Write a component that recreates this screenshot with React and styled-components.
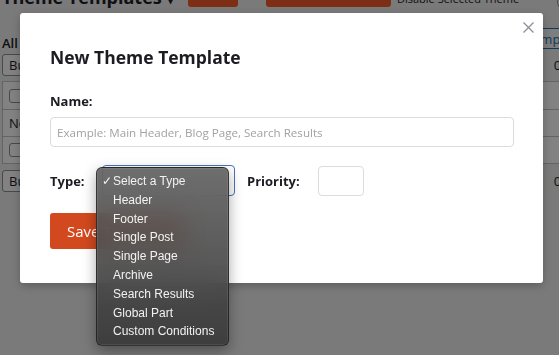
import React from 'react';
import styled, { createGlobalStyle } from 'styled-components';

const typeOptions = [
  'Select a Type',
  'Header',
  'Footer',
  'Single Post',
  'Single Page',
  'Archive',
  'Search Results',
  'Global Part',
  'Custom Conditions',
];

const GlobalStyle = createGlobalStyle`
  html, body {
    margin: 0;
    padding: 0;
  }
  body {
    width: 559px;
    height: 355px;
    overflow: hidden;
    background: #f0f0f1;
    font-family: 'Open Sans', 'Noto Sans', sans-serif;
    color: #1d2327;
  }
  * {
    box-sizing: border-box;
  }
`;

const App = () => {
  return (
    <>
      <GlobalStyle />
      <AdminPage>
        <TitleBar>
          <PageTitle>Theme Templates ▾</PageTitle>
          <HeaderButton>Themes</HeaderButton>
          <HeaderButton className="wide">Add New Theme Template</HeaderButton>
          <DisableText>Disable Selected Theme</DisableText>
          <Toggle />
        </TitleBar>
        <FilterRow>
          <ViewLinks>All (0)</ViewLinks>
          <LinkButton>Import Templates</LinkButton>
        </FilterRow>
        <Tablenav>
          <BulkSelect>Bulk actions</BulkSelect>
          <ItemCount>0 items</ItemCount>
        </Tablenav>
        <ListTable>
          <TableRow>
            <Checkbox />
          </TableRow>
          <TableRow>No theme templates found.</TableRow>
          <TableRow>
            <Checkbox />
          </TableRow>
        </ListTable>
        <Tablenav className="bottom">
          <BulkSelect>Bulk actions</BulkSelect>
          <ItemCount>0 items</ItemCount>
        </Tablenav>
      </AdminPage>

      <Overlay>
        <Modal>
          <CloseButton aria-label="Close">
            <svg width="11" height="11" viewBox="0 0 11 11">
              <path d="M0.5 0.5 L10.5 10.5 M10.5 0.5 L0.5 10.5" stroke="#8c8f94" strokeWidth="1.3" fill="none" />
            </svg>
          </CloseButton>
          <ModalTitle>New Theme Template</ModalTitle>
          <FieldLabel>Name:</FieldLabel>
          <TextInput placeholder="Example: Main Header, Blog Page, Search Results" />
          <TypeRow>
            <InlineLabel $width={52}>Type:</InlineLabel>
            <SelectBox>
              <TypeMenu>
                {typeOptions.map((option, i) => (
                  <MenuItem key={option}>
                    {i === 0 && <Check>✓</Check>}
                    {option}
                  </MenuItem>
                ))}
              </TypeMenu>
            </SelectBox>
            <InlineLabel $width={71} $gap={12}>
              Priority:
            </InlineLabel>
            <PriorityInput />
          </TypeRow>
          <SaveButton>Save Template</SaveButton>
        </Modal>
      </Overlay>
    </>
  );
};

const AdminPage = styled.div`
  width: 604px;
  margin-top: -22px;
  padding: 0 6px 0 2px;
  font-size: 13px;
`;

const TitleBar = styled.div`
  display: flex;
  align-items: center;
  height: 30px;
`;

const PageTitle = styled.h1`
  width: 160px;
  margin: 0;
  font-size: 18px;
  font-weight: 700;
  line-height: 28px;
  color: #1d2327;
  white-space: nowrap;
  align-self: flex-end;
  margin-bottom: -3px;
`;

const HeaderButton = styled.button`
  height: 28px;
  width: 50px;
  margin-left: 26px;
  border: none;
  border-radius: 3px;
  background: #f45d2a;
  color: #fff;
  font-family: inherit;
  font-size: 12px;
  white-space: nowrap;
  overflow: hidden;

  &.wide {
    width: 125px;
    margin-left: 28px;
  }
`;

const DisableText = styled.span`
  align-self: flex-end;
  margin-left: 6px;
  margin-bottom: 2px;
  font-size: 11px;
  white-space: nowrap;
`;

const Toggle = styled.span`
  align-self: flex-end;
  width: 16px;
  height: 16px;
  margin-left: 38px;
  margin-bottom: -2px;
  border-radius: 50%;
  border: 1px solid #8c8f94;
  background: #fff;
`;

const FilterRow = styled.div`
  display: flex;
  justify-content: space-between;
  align-items: flex-start;
  height: 24px;
  margin-top: 20px;
`;

const ViewLinks = styled.span`
  margin-top: 6px;
  line-height: 18px;
  font-size: 13px;
  font-weight: 600;
`;

const LinkButton = styled.span`
  height: 21px;
  padding: 0 8px;
  line-height: 20px;
  border: 1px solid #2271b1;
  border-radius: 3px;
  color: #2271b1;
  background: #f6f7f7;
  font-size: 13px;
`;

const Tablenav = styled.div`
  display: flex;
  justify-content: space-between;
  align-items: center;
  height: 24px;
  margin-top: 1px;

  &.bottom {
    margin-top: 5px;
  }
`;

const BulkSelect = styled.span`
  height: 22px;
  padding: 0 6px;
  line-height: 20px;
  border: 1px solid #8c8f94;
  border-radius: 3px;
  background: #fff;
  font-size: 13px;
`;

const ItemCount = styled.span`
  font-size: 13px;
`;

const ListTable = styled.div`
  margin-top: 4px;
  border: 1px solid #c3c4c7;
  background: #fff;
`;

const TableRow = styled.div`
  display: flex;
  align-items: center;
  height: 27px;
  padding-left: 6px;
  font-size: 13px;
  border-top: 1px solid #c3c4c7;

  &:first-child {
    border-top: none;
  }
`;

const Checkbox = styled.span`
  width: 14px;
  height: 14px;
  border: 1px solid #8c8f94;
  border-radius: 3px;
  background: #fff;
`;

const Overlay = styled.div`
  position: fixed;
  inset: 0;
  padding: 13px 0 0 20px;
  background: rgba(0, 0, 0, 0.49);
`;

const Modal = styled.div`
  position: relative;
  width: 523px;
  padding: 31px 29px 34px 30px;
  background: #fff;
  border-radius: 3px;
  box-shadow: 0 3px 10px rgba(0, 0, 0, 0.25);
`;

const CloseButton = styled.button`
  position: absolute;
  top: 9px;
  right: 9px;
  display: flex;
  padding: 0;
  border: none;
  background: none;
`;

const ModalTitle = styled.h2`
  margin: 0;
  font-size: 17.5px;
  font-weight: 700;
  line-height: 26px;
  color: #1c1b22;
`;

const FieldLabel = styled.label`
  display: block;
  margin-top: 21px;
  font-size: 13px;
  font-weight: 700;
  line-height: 20px;
  color: #1c1b22;
`;

const TextInput = styled.input`
  display: block;
  width: 100%;
  height: 30px;
  margin-top: 6px;
  padding: 0 6px;
  border: 1px solid #dcdcde;
  border-radius: 4px;
  font-family: 'Open Sans', 'Noto Sans', sans-serif;
  font-size: 11.6px;
  color: #1d2327;

  &::placeholder {
    color: #a2a2a6;
  }
`;

const TypeRow = styled.div`
  display: flex;
  align-items: center;
  height: 31px;
  margin-top: 18px;
`;

const InlineLabel = styled.label`
  width: ${({ $width }) => $width}px;
  margin-left: ${({ $gap }) => $gap || 0}px;
  font-size: 13px;
  font-weight: 700;
  line-height: 20px;
  color: #1c1b22;
`;

const SelectBox = styled.div`
  position: relative;
  width: 133px;
  height: 31px;
  border: 1px solid #4a72bf;
  border-radius: 4px;
  background: #fff;
`;

const PriorityInput = styled.input`
  width: 46px;
  height: 30px;
  border: 1px solid #dcdcde;
  border-radius: 4px;
`;

const SaveButton = styled.button`
  display: block;
  height: 36px;
  margin-top: 17px;
  padding: 0 17px;
  border: none;
  border-radius: 3px;
  background: #d2491f;
  color: #fff;
  font-family: 'Open Sans', 'Noto Sans', sans-serif;
  font-size: 15px;
`;

const TypeMenu = styled.ul`
  position: absolute;
  top: 1px;
  left: -7px;
  width: 133px;
  margin: 0;
  padding: 4px 0;
  list-style: none;
  border: 1px solid rgba(20, 20, 20, 0.6);
  border-radius: 6px;
  background: linear-gradient(rgba(94, 94, 94, 0.9), rgba(58, 58, 58, 0.94));
  backdrop-filter: blur(14px);
  box-shadow: 0 5px 14px rgba(0, 0, 0, 0.35), inset 0 0 0 1px rgba(255, 255, 255, 0.08);
  z-index: 2;
`;

const MenuItem = styled.li`
  position: relative;
  height: 18.8px;
  padding-left: 16px;
  font-family: 'Liberation Sans', Arial, sans-serif;
  font-size: 12px;
  line-height: 18.8px;
  color: #f2f2f2;
  white-space: nowrap;
`;

const Check = styled.span`
  position: absolute;
  left: 5px;
  font-size: 12px;
`;

export default App;
